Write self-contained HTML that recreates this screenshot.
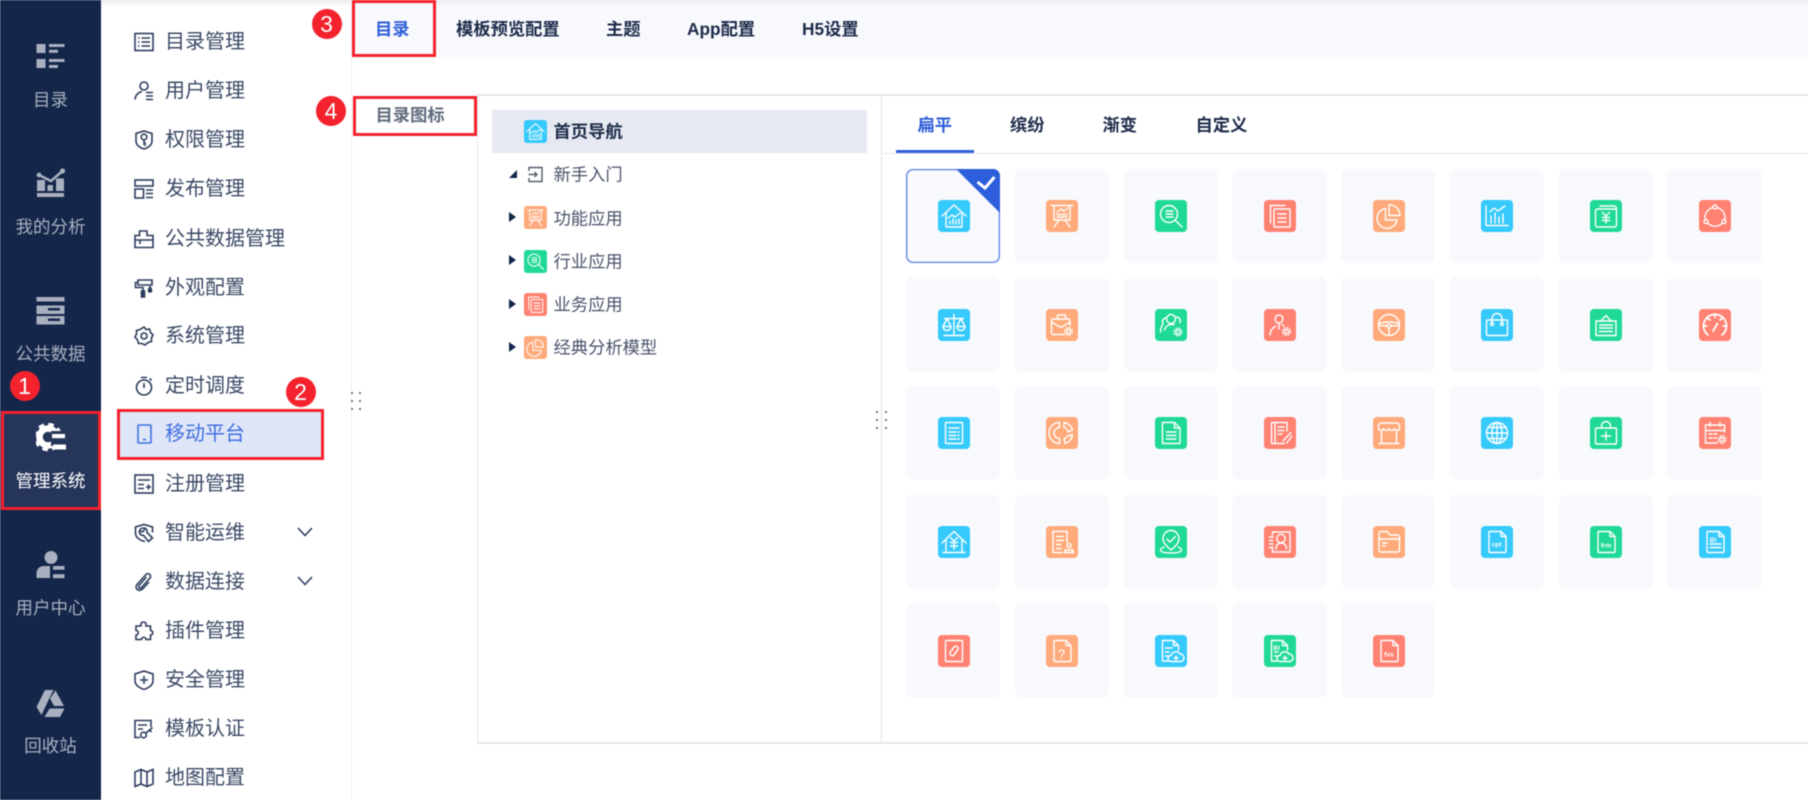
<!DOCTYPE html>
<html lang="zh">
<head>
<meta charset="utf-8">
<title>移动平台</title>
<style>
html,body{margin:0;padding:0;width:1808px;height:800px;overflow:hidden;background:#fff}
body{font-family:"Liberation Sans","Noto Sans CJK SC",sans-serif;position:relative}
#w{position:absolute;left:0;top:0;width:1808px;height:800px;overflow:hidden;filter:blur(.4px)}
.a{position:absolute}
.nav{position:absolute;left:0;width:101px;text-align:center;font-size:17.5px;line-height:28px;color:#a9b0bf;white-space:nowrap}
.m{position:absolute;left:165px;font-size:20px;line-height:30px;color:#3b4966;white-space:nowrap;transform:translateY(1px)}
.mi{position:absolute;left:134px;width:20px;height:20px;fill:none;stroke:#2c3c5c;stroke-width:1.6}
.tb{position:absolute;top:15px;font-size:17.3px;line-height:28px;font-weight:700;color:#1d2b4a;white-space:nowrap}
.tr{position:absolute;left:553.500px;font-size:17.3px;line-height:26px;color:#485269;white-space:nowrap;transform:translateY(.7px)}
.ti{position:absolute;left:523.5px;width:23px;height:23px}
.ar{position:absolute;left:509px;width:0;height:0;border-left:7px solid #14264a;border-top:5.5px solid transparent;border-bottom:5.5px solid transparent}
.rt{position:absolute;top:111px;font-size:17.3px;line-height:28px;font-weight:700;color:#1d2b4a;white-space:nowrap}
.t{position:absolute;width:94.4px;height:94.4px;border-radius:7px;background:#f8f9fd}
.t svg{position:absolute;left:31.7px;top:31.3px;width:32px;height:32px}
.ic{fill:none;stroke:#fff;stroke-width:1.4;stroke-linecap:round;stroke-linejoin:round}
.ic text{fill:#fff;stroke:none;font-family:"Liberation Sans",sans-serif;font-weight:700;font-size:6.5px;text-anchor:middle}
.r{position:absolute;border:3px solid #f3222c;box-sizing:border-box}
.c{position:absolute;width:30px;height:30px;border-radius:50%;background:#f3222c;color:#fff;font-size:23px;line-height:30px;text-align:center}
.d{position:absolute;width:2px;height:2px;border-radius:50%;background:#46536f}
</style>
</head>
<body>
<div id="w">

<!-- left nav -->
<div class="a" style="left:0;top:0;width:101px;height:800px;background:#14264a"></div>
<div class="a" style="left:0;top:411px;width:101px;height:99px;background:#26355a"></div>

<svg class="a" style="left:36px;top:44px" width="29" height="25" viewBox="0 0 29 25" fill="#a9b0bf"><rect x="0.5" y="0" width="9" height="9"/><rect x="13" y="0" width="15.5" height="3"/><rect x="13" y="5.8" width="9" height="3"/><rect x="0.5" y="15" width="9" height="9"/><rect x="13" y="15" width="15.5" height="3"/><rect x="13" y="21" width="9" height="3"/></svg>
<div class="nav" style="top:86px;">目录</div>

<svg class="a" style="left:36px;top:168px" width="29" height="30" viewBox="0 0 29 30" fill="#a9b0bf"><path d="M3 7 L15 13 L26.5 3" fill="none" stroke="#a9b0bf" stroke-width="2.5"/><circle cx="3" cy="7" r="2.4"/><circle cx="26.5" cy="3" r="2.6"/><path d="M1 12H9V23H1Z M11.5 17H17V23H11.5Z M20 10.5H28V23H20Z M1 25H28V29H1Z"/></svg>
<div class="nav" style="top:213px;">我的分析</div>

<svg class="a" style="left:36px;top:297px" width="29" height="28" viewBox="0 0 29 28" fill="#a9b0bf"><rect x="0.5" y="0" width="28" height="4.5"/><path fill-rule="evenodd" d="M0.5 8.5H28.5V17H0.5Z M12 11V13.5H24V11Z"/><path fill-rule="evenodd" d="M0.5 19H28.5V27.5H0.5Z M12 21.5V24H24V21.5Z"/></svg>
<div class="nav" style="top:340px;">公共数据</div>

<svg class="a" style="left:36px;top:423px" width="30" height="30" viewBox="0 0 30 30"><circle cx="12" cy="14" r="8.5" fill="none" stroke="#fff" stroke-width="6.5"/><circle cx="12" cy="14" r="12.5" fill="none" stroke="#fff" stroke-width="3.5" stroke-dasharray="5.5 4.3"/><rect x="15" y="8" width="15" height="15" fill="#26355a"/><rect x="16" y="11" width="13" height="4.2" fill="#fff"/><rect x="17" y="21.5" width="13" height="5" fill="#fff"/></svg>
<div class="nav" style="top:467px;color:#fff;">管理系统</div>

<svg class="a" style="left:36px;top:550px" width="29" height="29" viewBox="0 0 29 29" fill="#a9b0bf"><circle cx="15" cy="7.5" r="6.5"/><path d="M0.5 28V23C0.5 19 4 16 8 16H14V28Z"/><rect x="17" y="16" width="11.5" height="3.7"/><rect x="17" y="24.2" width="11.5" height="4"/></svg>
<div class="nav" style="top:594px;">用户中心</div>

<svg class="a" style="left:35px;top:689px" width="30" height="29" viewBox="0 0 30 29" fill="#a9b0bf"><path d="M10 1H18.5L14 10 6.5 26 1.5 18Z"/><path d="M20.5 1.5L29 17H19L15 9.5Z"/><path d="M14.5 19.5H29.5L25 28H9.5Z"/></svg>
<div class="nav" style="top:732px;">回收站</div>

<!-- second menu -->
<div class="a" style="left:101px;top:0;width:250px;height:800px;background:#fff"></div>
<div class="a" style="left:351px;top:0;width:1px;height:800px;background:#eff0f5"></div>
<div class="a" style="left:118px;top:411px;width:204px;height:48px;background:#dfe6f8"></div>

<svg class="mi" style="top:32px" viewBox="0 0 20 20"><rect x="1" y="1.5" width="18" height="17"/><path d="M4 6h1.5M7.5 6H16M4 10h1.5M7.5 10H16M4 14h1.5M7.5 14H16"/></svg>
<div class="m" style="top:26px">目录管理</div>
<svg class="mi" style="top:81px" viewBox="0 0 20 20"><circle cx="10" cy="5" r="4"/><path d="M1 18.5C1.5 14 4 11.5 8 10.5M12 11.5h7M12 15h7M12 18.5h7"/></svg>
<div class="m" style="top:75px">用户管理</div>
<svg class="mi" style="top:130px" viewBox="0 0 20 20"><path d="M10 1L18 3.5V11C18 15 14 18 10 19 6 18 2 15 2 11V3.5Z"/><circle cx="10" cy="7" r="2.8"/><path d="M10 10V15M10 13H12M10 15H12"/></svg>
<div class="m" style="top:124px">权限管理</div>
<svg class="mi" style="top:179px" viewBox="0 0 20 20"><rect x="1" y="1" width="18" height="6"/><rect x="1" y="10" width="8.5" height="9"/><path d="M12 11h7M12 14.5h7M12 18.5h7"/></svg>
<div class="m" style="top:173px">发布管理</div>
<svg class="mi" style="top:229px" viewBox="0 0 20 20"><path d="M1 6.5H5.5V2H13V6.5H19V18.500H1Z"/><path d="M1 11H19M6 11V15"/></svg>
<div class="m" style="top:223px">公共数据管理</div>
<svg class="mi" style="top:278px" viewBox="0 0 20 20"><path d="M4 2H18V7H4ZM4 4.5H1.5V9.5H9V13"/><rect x="7.5" y="13" width="3" height="6" fill="#2c3c5c"/><path d="M16 9C14 12 14 14 16 14 18 14 18 12 16 9Z" fill="#2c3c5c"/></svg>
<div class="m" style="top:272px">外观配置</div>
<svg class="mi" style="top:326px" viewBox="0 0 20 20"><path d="M10 1L12 3.5 15.5 3 16.5 6.5 19 9 17.5 12 17.5 15.5 14 16.5 11 19 8 17.5 4.5 17.5 3.5 14 1 11 2.5 8 2.5 4.5 6 3.5Z"/><circle cx="10" cy="10" r="3"/></svg>
<div class="m" style="top:320px">系统管理</div>
<svg class="mi" style="top:376px" viewBox="0 0 20 20"><circle cx="10" cy="11.5" r="7.5"/><path d="M7 1.5H13M10 7V12M15.5 2.5L17.5 4.5"/></svg>
<div class="m" style="top:370px">定时调度</div>
<svg class="mi" style="top:424px;stroke:#3f6fe0" viewBox="0 0 20 20"><rect x="4" y="1" width="13" height="18" rx="1"/><path d="M9 15.5H12"/></svg>
<div class="m" style="top:418px;color:#3f6fe0">移动平台</div>
<svg class="mi" style="top:474px" viewBox="0 0 20 20"><rect x="1" y="1" width="18" height="18"/><path d="M4 6H16M4 10.5H10M4 14.5H10M12 13H17M14.5 10.5V15.5"/></svg>
<div class="m" style="top:468px">注册管理</div>
<svg class="mi" style="top:523px" viewBox="0 0 20 20"><path d="M11 18.5C6 17.5 1.500 14.500 1.500 10V4L10 1.500 18.500 4V9.500"/><path d="M9.500 5A4 4 0 0 0 5.500 10C6 11.500 7.500 12.500 9.500 12.300L14.500 18.500 18.500 15 13 9.500C13.500 7.500 12.500 5.500 10.500 5L10 7.500 8 9 6 8"/></svg>
<div class="m" style="top:517px">智能运维</div>
<svg class="mi" style="top:572px" viewBox="0 0 20 20"><path d="M12.5 5L5 13.5C3.5 15.5 6 17 7.5 15.5L16 6C18 3.5 14.5 0 12 2.5L3 12.5C0 16 4.5 20.5 8.5 17L15 10"/></svg>
<div class="m" style="top:566px">数据连接</div>
<svg class="mi" style="top:621px" viewBox="0 0 20 20"><path d="M7 3C7 0.5 12 0.5 12 3V5H16.5V9.5C19.5 9.5 19.5 14 16.5 14V18.5H12C12 15.5 7.5 15.5 7.5 18.5H2V14C5 14 5 9.5 2 9.5V5H7Z"/></svg>
<div class="m" style="top:615px">插件管理</div>
<svg class="mi" style="top:670px" viewBox="0 0 20 20"><path d="M10 1L19 4V11C19 15 14.5 18 10 19.5 5.5 18 1 15 1 11V4Z"/><path d="M10 6V14M6 10H14"/></svg>
<div class="m" style="top:664px">安全管理</div>
<svg class="mi" style="top:719px" viewBox="0 0 20 20"><path d="M6 18.5H1V1.5H17V8M4 6H13M4 10H9"/><circle cx="9.5" cy="16" r="2.8"/><path d="M12 14L18.5 8.5M15.5 11L17.5 13"/></svg>
<div class="m" style="top:713px">模板认证</div>
<svg class="mi" style="top:768px" viewBox="0 0 20 20"><path d="M1 4L7 1.5 13 4 19 1.5V16L13 18.5 7 16 1 18.5Z M7 1.5V16M13 4V18.5"/></svg>
<div class="m" style="top:762px">地图配置</div>

<svg class="a" style="left:296px;top:526px" width="18" height="12" viewBox="0 0 18 12"><path d="M2 2L9 9.5 16 2" fill="none" stroke="#2c3c5c" stroke-width="1.6"/></svg>
<svg class="a" style="left:296px;top:575px" width="18" height="12" viewBox="0 0 18 12"><path d="M2 2L9 9.5 16 2" fill="none" stroke="#2c3c5c" stroke-width="1.6"/></svg>

<div class="a" style="left:101px;top:0;width:1707px;height:6px;background:linear-gradient(#e8eaef,rgba(255,255,255,0));z-index:3"></div>

<!-- top tabs -->
<div class="a" style="left:352px;top:0;width:1456px;height:57px;background:#f8f9fd"></div>
<div class="tb" style="left:375px;color:#2f5fd8">目录</div>
<div class="tb" style="left:456px">模板预览配置</div>
<div class="tb" style="left:606px">主题</div>
<div class="tb" style="left:687px">App配置</div>
<div class="tb" style="left:802px">H5设置</div>

<!-- panel -->
<div class="a" style="left:476.5px;top:94px;width:1331.5px;height:2px;background:#e6e7ee"></div>
<div class="a" style="left:476.5px;top:94px;width:1.5px;height:649px;background:#e6e7ee"></div>
<div class="a" style="left:476.5px;top:742px;width:1331.5px;height:1.5px;background:#e6e7ee"></div>
<div class="a" style="left:881px;top:94px;width:1.2px;height:650px;background:#e2e2ea"></div>
<div class="a" style="left:882px;top:153px;width:926px;height:1.3px;background:#e6e7ee"></div>

<div class="a" style="left:375.500px;top:102px;font-size:17.3px;line-height:26px;font-weight:700;color:#626c7e">目录图标</div>

<!-- tree -->
<div class="a" style="left:492px;top:110px;width:375px;height:43px;background:#e6e9f1"></div>
<svg class="ti ic" style="top:119.5px" viewBox="0 0 32 32"><rect width="32" height="32" rx="4" fill="#36c9fb" stroke="none"/><path d="M4 16L16 5 28 16M8 13V27H24V13M12 24v-3M15 24v-5M18 24v-4M21 24v-5M10 18l4-3 3 2 5-4"/></svg>
<div class="tr" style="top:118px;font-weight:700;color:#1d2b4a">首页导航</div>

<div class="a" style="left:509px;top:170px;width:0;height:0;border-bottom:8px solid #14264a;border-left:8px solid transparent"></div>
<svg class="a" style="left:528px;top:166px" width="15" height="17" viewBox="0 0 15 17"><path d="M1 5V1.5H14V15.5H1V12M0.5 8.5H9M6.5 6L9 8.5 6.5 11" fill="none" stroke="#555d6d" stroke-width="1.4"/></svg>
<div class="tr" style="top:161px">新手入门</div>

<div class="ar" style="top:212px"></div>
<svg class="ti ic" style="top:206px" viewBox="0 0 32 32"><rect width="32" height="32" rx="4" fill="#ffaa7b" stroke="none"/><path d="M5 5.5H27M8 5.5V20H24V5.5M11 17h10M11 14.5h10M11 12l4-3 3 2 4-3M13 20L8 27M19 20L24 27"/></svg>
<div class="tr" style="top:204.5px">功能应用</div>

<div class="ar" style="top:255px"></div>
<svg class="ti ic" style="top:249.5px" viewBox="0 0 32 32"><rect width="32" height="32" rx="4" fill="#20d997" stroke="none"/><circle cx="14" cy="14" r="8.5"/><path d="M20 20L27 27M11 11h7M11 14h7M11 17h7"/></svg>
<div class="tr" style="top:248px">行业应用</div>

<div class="ar" style="top:298.5px"></div>
<svg class="ti ic" style="top:292.5px" viewBox="0 0 32 32"><rect width="32" height="32" rx="4" fill="#ff8272" stroke="none"/><rect x="10" y="9" width="16" height="18" rx="1"/><path d="M6.5 23V5.5H21M14 14h8M14 18h8M14 22h8"/></svg>
<div class="tr" style="top:291px">业务应用</div>

<div class="ar" style="top:341.5px"></div>
<svg class="ti ic" style="top:335.5px" viewBox="0 0 32 32"><rect width="32" height="32" rx="4" fill="#ffaa7b" stroke="none"/><path d="M12.5 8.5A10 10 0 1 0 24 20H12.5ZM16 5A10.5 10.5 0 0 1 27 15.5H16Z"/></svg>
<div class="tr" style="top:334px">经典分析模型</div>

<!-- resizers -->
<i class="d" style="left:351px;top:392px"></i><i class="d" style="left:359px;top:392px"></i>
<i class="d" style="left:351px;top:400px"></i><i class="d" style="left:359px;top:400px"></i>
<i class="d" style="left:351px;top:408px"></i><i class="d" style="left:359px;top:408px"></i>
<i class="d" style="left:876px;top:411px"></i><i class="d" style="left:885px;top:411px"></i>
<i class="d" style="left:876px;top:419px"></i><i class="d" style="left:885px;top:419px"></i>
<i class="d" style="left:876px;top:427px"></i><i class="d" style="left:885px;top:427px"></i>

<!-- right tabs -->
<div class="rt" style="left:917.5px;color:#2f5fd8">扁平</div>
<div class="rt" style="left:1010px">缤纷</div>
<div class="rt" style="left:1102.5px">渐变</div>
<div class="rt" style="left:1195.5px">自定义</div>
<div class="a" style="left:896px;top:150px;width:78px;height:3px;background:#2f5fd8"></div>

<!-- tiles row 1 -->
<div class="t" style="left:906px;top:168.7px;box-shadow:inset 0 0 0 1.3px #5a80e6;overflow:hidden">
<svg class="ic" viewBox="0 0 32 32"><rect width="32" height="32" rx="4" fill="#36c9fb" stroke="none"/><path d="M4 16L16 5 28 16M8 13V27H24V13M12 24v-3M15 24v-5M18 24v-4M21 24v-5M10 18l4-3 3 2 5-4"/></svg>
<svg style="left:50.4px;top:0;width:44px;height:44px" viewBox="0 0 44 44"><path d="M0 0H44V44Z" fill="#2d5fdc"/><path d="M21.5 13L29 19 38.5 8" fill="none" stroke="#fff" stroke-width="3"/></svg>
</div>
<div class="t" style="left:1014.8px;top:168.7px"><svg class="ic" viewBox="0 0 32 32"><rect width="32" height="32" rx="4" fill="#ffaa7b" stroke="none"/><path d="M5 5.5H27M8 5.5V20H24V5.5M11 17h10M11 14.5h10M11 12l4-3 3 2 4-3M13 20L8 27M19 20L24 27"/></svg></div>
<div class="t" style="left:1123.5px;top:168.7px"><svg class="ic" viewBox="0 0 32 32"><rect width="32" height="32" rx="4" fill="#20d997" stroke="none"/><circle cx="14" cy="14" r="8.5"/><path d="M20 20L27 27M11 11h7M11 14h7M11 17h7"/></svg></div>
<div class="t" style="left:1232.3px;top:168.7px"><svg class="ic" viewBox="0 0 32 32"><rect width="32" height="32" rx="4" fill="#ff8272" stroke="none"/><rect x="10" y="9" width="16" height="18" rx="1"/><path d="M6.5 23V5.5H21M14 14h8M14 18h8M14 22h8"/></svg></div>
<div class="t" style="left:1341px;top:168.7px"><svg class="ic" viewBox="0 0 32 32"><rect width="32" height="32" rx="4" fill="#ffaa7b" stroke="none"/><path d="M12.5 8.5A10 10 0 1 0 24 20H12.5ZM16 5A10.5 10.5 0 0 1 27 15.5H16Z"/></svg></div>
<div class="t" style="left:1449.8px;top:168.7px"><svg class="ic" viewBox="0 0 32 32"><rect width="32" height="32" rx="4" fill="#36c9fb" stroke="none"/><path d="M5 6V25.5H27M10 23v-7M14 23v-10M18 23v-6M22 23v-9M9 12l4-4 4 3 7-5"/></svg></div>
<div class="t" style="left:1558.6px;top:168.7px"><svg class="ic" viewBox="0 0 32 32"><rect width="32" height="32" rx="4" fill="#20d997" stroke="none"/><rect x="5.5" y="9" width="21" height="18" rx="2"/><path d="M10 6H24A2.5 2.5 0 0 1 26.5 8.5V10M12.5 12.5L16 16 19.5 12.5M16 16V23M12.5 17.5H19.5M12.5 20.5H19.5"/></svg></div>
<div class="t" style="left:1667.3px;top:168.7px"><svg class="ic" viewBox="0 0 32 32"><rect width="32" height="32" rx="4" fill="#ff8272" stroke="none"/><circle cx="16" cy="7" r="2"/><circle cx="7" cy="21.5" r="2"/><circle cx="25" cy="21.5" r="2"/><path d="M14 7.5A10.5 10.5 0 0 0 6 19M18 7.5A10.5 10.5 0 0 1 26 19M9 23.5A10.5 10.5 0 0 0 23 23.5"/></svg></div>

<!-- row 2 -->
<div class="t" style="left:906px;top:277.4px"><svg class="ic" viewBox="0 0 32 32"><rect width="32" height="32" rx="4" fill="#36c9fb" stroke="none"/><path d="M16 5.5V26M6 26.5H26M6.5 9.5H25.5M9 9.5L5 17.5M9 9.5L13 17.5M5 17.5A4 4 0 0 0 13 17.5ZM23 9.5L19 17.5M23 9.500L27 17.5M19 17.5A4 4 0 0 0 27 17.5Z"/></svg></div>
<div class="t" style="left:1014.8px;top:277.4px"><svg class="ic" viewBox="0 0 32 32"><rect width="32" height="32" rx="4" fill="#ffaa7b" stroke="none"/><path d="M24 16V11.5A1.5 1.5 0 0 0 22.5 10H7A1.5 1.5 0 0 0 5.5 11.5V24A1.5 1.5 0 0 0 7 25.5H18M11.5 10V6H19.5V10M5.5 13L15 18.5 24 13"/><circle cx="22.5" cy="22.5" r="2"/><circle cx="22.5" cy="22.5" r="3.8" stroke-width="1.6" stroke-dasharray="1.8 1.2" stroke-linecap="butt"/></svg></div>
<div class="t" style="left:1123.5px;top:277.4px"><svg class="ic" viewBox="0 0 32 32"><rect width="32" height="32" rx="4" fill="#20d997" stroke="none"/><circle cx="16" cy="10" r="4.5"/><path d="M11 9A4 4 0 0 0 8 15C6.500 17 5.500 20 5.500 23M21 8A4 4 0 0 1 25 13.500M9.500 21A7 7 0 0 1 16 15.500H19"/><circle cx="23" cy="23" r="2"/><circle cx="23" cy="23" r="3.8" stroke-width="1.6" stroke-dasharray="1.8 1.2" stroke-linecap="butt"/></svg></div>
<div class="t" style="left:1232.3px;top:277.4px"><svg class="ic" viewBox="0 0 32 32"><rect width="32" height="32" rx="4" fill="#ff8272" stroke="none"/><circle cx="15" cy="10" r="4"/><path d="M15 14V20M6 26A10 10 0 0 1 12 17M18 15.5L20 17"/><circle cx="22.5" cy="22.500" r="2"/><circle cx="22.5" cy="22.500" r="3.8" stroke-width="1.6" stroke-dasharray="1.8 1.2" stroke-linecap="butt"/></svg></div>
<div class="t" style="left:1341px;top:277.4px"><svg class="ic" viewBox="0 0 32 32"><rect width="32" height="32" rx="4" fill="#ffaa7b" stroke="none"/><circle cx="16" cy="16" r="10.5"/><path d="M6 14.500C12 12.500 20 12.500 26 14.500M6 16.500L14 17M26 16.500L18 17M16 19V26"/><circle cx="16" cy="17" r="1.8"/></svg></div>
<div class="t" style="left:1449.8px;top:277.4px"><svg class="ic" viewBox="0 0 32 32"><rect width="32" height="32" rx="4" fill="#36c9fb" stroke="none"/><rect x="5.5" y="11" width="21" height="15.5" rx="1"/><path d="M11 14V9.5A5 5 0 0 1 21 9.5V14"/><circle cx="11" cy="15" r="1.500"/><circle cx="21" cy="15" r="1.500"/></svg></div>
<div class="t" style="left:1558.6px;top:277.4px"><svg class="ic" viewBox="0 0 32 32"><rect width="32" height="32" rx="4" fill="#20d997" stroke="none"/><rect x="6" y="12" width="20" height="14.5"/><path d="M11 12L16 6.500 21 12M9.500 16H22.500M9.500 19H22.500M9.500 22.500H22.500"/></svg></div>
<div class="t" style="left:1667.3px;top:277.4px"><svg class="ic" viewBox="0 0 32 32"><rect width="32" height="32" rx="4" fill="#ff8272" stroke="none"/><path d="M9 26A11.500 11.500 0 1 1 23 26" stroke-width="1.800"/><path d="M16 5V8.500M8.500 9L11 11M23.500 9L21 11M4.500 17H8M27.500 17H24M14 22L18.500 14.500" stroke-width="1.800"/></svg></div>

<!-- row 3 -->
<div class="t" style="left:906px;top:386px"><svg class="ic" viewBox="0 0 32 32"><rect width="32" height="32" rx="4" fill="#36c9fb" stroke="none"/><rect x="7.500" y="5.500" width="17" height="21" rx="1"/><path d="M11 11H21M11 15H18M20 15H21M11 18.500H18M20 18.500H21M11 22H18M20 22H21"/></svg></div>
<div class="t" style="left:1014.8px;top:386px"><svg class="ic" viewBox="0 0 32 32"><rect width="32" height="32" rx="4" fill="#ffaa7b" stroke="none"/><path d="M13.500 5.500A10.500 10.500 0 0 0 13.500 26.500V21.500A5.500 5.500 0 0 1 13.500 10.500ZM18 5.500A10.500 10.500 0 0 1 26.500 13L22 15A5.500 5.500 0 0 0 18 10.500ZM26.500 18A10.500 10.500 0 0 1 19 26.500L18 21.500A5.500 5.500 0 0 0 22 18.500Z"/></svg></div>
<div class="t" style="left:1123.5px;top:386px"><svg class="ic" viewBox="0 0 32 32"><rect width="32" height="32" rx="4" fill="#20d997" stroke="none"/><path d="M7.500 5.500H19.500L25 11V26.500H7.500ZM19.500 5.500V11H25M11.500 15H21M11.500 18.500H21M11.500 22H21"/></svg></div>
<div class="t" style="left:1232.3px;top:386px"><svg class="ic" viewBox="0 0 32 32"><rect width="32" height="32" rx="4" fill="#ff8272" stroke="none"/><path d="M7.500 5.500H23V14M7.500 5.500V26.500H20M11 5.500V26.500M14 10H20M14 13.500H20M14 17H18M19 24L27 15.500M22.500 26L28 19"/></svg></div>
<div class="t" style="left:1341px;top:386px"><svg class="ic" viewBox="0 0 32 32"><rect width="32" height="32" rx="4" fill="#ffaa7b" stroke="none"/><path d="M8.500 6H23.500C26 6 27 8.500 26.500 11 26.500 14 22 14 21.500 11.500 21 14 16.500 14 16 11.500 15.500 14 11 14 10.500 11.500 10 14 5.500 14 5.500 11 5 8.500 6 6 8.500 6ZM8.500 14V26.500M23.500 14V26.500M6 26.500H26"/></svg></div>
<div class="t" style="left:1449.8px;top:386px"><svg class="ic" viewBox="0 0 32 32"><rect width="32" height="32" rx="4" fill="#36c9fb" stroke="none"/><circle cx="16" cy="16" r="10.500"/><ellipse cx="16" cy="16" rx="5" ry="10.500"/><path d="M16 5.500V26.500M5.500 16H26.500M7 10.500H25M7 21.500H25"/></svg></div>
<div class="t" style="left:1558.6px;top:386px"><svg class="ic" viewBox="0 0 32 32"><rect width="32" height="32" rx="4" fill="#20d997" stroke="none"/><rect x="5.500" y="11" width="21" height="16" rx="1"/><path d="M11.500 11V9A4.500 4.500 0 0 1 20.500 9V11M11.500 19H20.500M16 15V23"/></svg></div>
<div class="t" style="left:1667.3px;top:386px"><svg class="ic" viewBox="0 0 32 32"><rect width="32" height="32" rx="4" fill="#ff8272" stroke="none"/><path d="M18 26H6.500V8H25.500V15M6.500 13.500H25.500M11 5.500V9.500M21 5.500V9.500M10 17H13M15 17H18M10 21H13M15 21H17"/><circle cx="23" cy="22.500" r="2"/><circle cx="23" cy="22.500" r="3.800" stroke-width="1.600" stroke-dasharray="1.800 1.200" stroke-linecap="butt"/></svg></div>

<!-- row 4 -->
<div class="t" style="left:906px;top:494.7px"><svg class="ic" viewBox="0 0 32 32"><rect width="32" height="32" rx="4" fill="#36c9fb" stroke="none"/><path d="M4 17L16 5.500 28 17M8 14V26.500H24V14M5 26.500H27M12.500 11.500L16 15 19.500 11.500M16 15V23M12.500 16.500H19.500M12.500 20H19.500"/></svg></div>
<div class="t" style="left:1014.8px;top:494.7px"><svg class="ic" viewBox="0 0 32 32"><rect width="32" height="32" rx="4" fill="#ffaa7b" stroke="none"/><path d="M16 26.500H7V5.500H21V16M10.500 10.500H17.500M10.500 14.500H17.500M10.500 18.500H15M10.500 22.500H15M18 26.500H28M19 24H27V26.500H19Z"/><circle cx="23" cy="19.500" r="2"/></svg></div>
<div class="t" style="left:1123.5px;top:494.7px"><svg class="ic" viewBox="0 0 32 32"><rect width="32" height="32" rx="4" fill="#20d997" stroke="none"/><path d="M16 24C11 20 8 16.500 8 12.500A8 8 0 0 1 24 12.500C24 16.500 21 20 16 24ZM12 13L15 16 20.500 10.500M9 21C6.500 22 5.500 23 5.500 24 5.500 26 10 27 16 27S26.500 26 26.500 24C26.500 23 25.500 22 23 21"/></svg></div>
<div class="t" style="left:1232.3px;top:494.7px"><svg class="ic" viewBox="0 0 32 32"><rect width="32" height="32" rx="4" fill="#ff8272" stroke="none"/><path d="M8.500 9V6H26V26H8.500V23M5.500 11H9M5.500 14.500H9M5.500 18H9M5.500 21.500H9M12 23C12 19 14 17 17 17S22.500 19 22.500 23"/><circle cx="17" cy="12.500" r="4.200"/></svg></div>
<div class="t" style="left:1341px;top:494.7px"><svg class="ic" viewBox="0 0 32 32"><rect width="32" height="32" rx="4" fill="#ffaa7b" stroke="none"/><path d="M6 7.500A2 2 0 0 1 8 5.500H14L17 9H24.500A2 2 0 0 1 26.500 11V24A2 2 0 0 1 24.500 26H8A2 2 0 0 1 6 24ZM6 13H26.500M9.500 17H14M9.500 20H12"/></svg></div>
<div class="t" style="left:1449.8px;top:494.7px"><svg class="ic" viewBox="0 0 32 32"><rect width="32" height="32" rx="4" fill="#36c9fb" stroke="none"/><path d="M8 6.500A1 1 0 0 1 9 5.500H20L25 10.500V25.500A1 1 0 0 1 24 26.500H9A1 1 0 0 1 8 25.500ZM20 5.500V10.500H25"/><text x="15.500" y="20.500">cpt</text></svg></div>
<div class="t" style="left:1558.6px;top:494.7px"><svg class="ic" viewBox="0 0 32 32"><rect width="32" height="32" rx="4" fill="#20d997" stroke="none"/><path d="M8 6.500A1 1 0 0 1 9 5.500H20L25 10.500V25.500A1 1 0 0 1 24 26.500H9A1 1 0 0 1 8 25.500ZM20 5.500V10.500H25"/><text x="16" y="21.500">frm</text></svg></div>
<div class="t" style="left:1667.3px;top:494.7px"><svg class="ic" viewBox="0 0 32 32"><rect width="32" height="32" rx="4" fill="#36c9fb" stroke="none"/><path d="M8 6.500A1 1 0 0 1 9 5.500H20L25 10.500V25.500A1 1 0 0 1 24 26.500H9A1 1 0 0 1 8 25.500ZM20 5.500V10.500H25M11 18H22M11 21.500H22"/><text x="14" y="16">BI</text></svg></div>

<!-- row 5 -->
<div class="t" style="left:906px;top:603.3px"><svg class="ic" viewBox="0 0 32 32"><rect width="32" height="32" rx="4" fill="#ff8272" stroke="none"/><rect x="7.500" y="5.500" width="17" height="21" rx="1"/><path d="M14.500 14.500L12 17.500A2.500 2.500 0 0 0 15.500 20.500L18 17.500M17.500 17.500L20 14.500A2.500 2.500 0 0 0 16.500 11.500L14 14.500"/></svg></div>
<div class="t" style="left:1014.8px;top:603.3px"><svg class="ic" viewBox="0 0 32 32"><rect width="32" height="32" rx="4" fill="#ffaa7b" stroke="none"/><path d="M8 6.500A1 1 0 0 1 9 5.500H20L25 10.500V25.500A1 1 0 0 1 24 26.500H9A1 1 0 0 1 8 25.500ZM20 5.500V10.500H25"/><text x="15.500" y="23.500" style="font-size:13px;font-weight:400">?</text></svg></div>
<div class="t" style="left:1123.5px;top:603.3px"><svg class="ic" viewBox="0 0 32 32"><rect width="32" height="32" rx="4" fill="#36c9fb" stroke="none"/><path d="M13 26H7.500V5.500H18.500L23.500 10.500V15M18.500 5.500V10.500H23.500M10.500 13H17M10.500 17H14M10.500 21H13"/><path d="M16 26.500A3 3 0 0 1 16 20.500 5 5 0 0 1 25 19 3.800 3.800 0 0 1 26 26.500ZM21 21V25M19 23H23"/></svg></div>
<div class="t" style="left:1232.3px;top:603.3px"><svg class="ic" viewBox="0 0 32 32"><rect width="32" height="32" rx="4" fill="#20d997" stroke="none"/><path d="M13 26H7.500V5.500H18.500L23.500 10.500V15M18.500 5.500V10.500H23.500M10.500 17H14M10.500 21H13"/><path d="M16 26.500A3 3 0 0 1 16 20.500 5 5 0 0 1 25 19 3.800 3.800 0 0 1 26 26.500ZM21 21V25M19 23H23"/><text x="12.500" y="15">BI</text></svg></div>
<div class="t" style="left:1341px;top:603.3px"><svg class="ic" viewBox="0 0 32 32"><rect width="32" height="32" rx="4" fill="#ff8272" stroke="none"/><path d="M8 6.500A1 1 0 0 1 9 5.500H20L25 10.500V25.500A1 1 0 0 1 24 26.500H9A1 1 0 0 1 8 25.500ZM20 5.500V10.500H25"/><text x="16" y="21.500">fvs</text></svg></div>

<!-- annotations -->
<div class="r" style="left:1px;top:411px;width:100px;height:99px"></div>
<div class="r" style="left:117px;top:409px;width:207px;height:51px"></div>
<div class="r" style="left:352px;top:0;width:84px;height:57px;z-index:4"></div>
<div class="r" style="left:353px;top:96px;width:124px;height:40px"></div>
<div class="c" style="left:9.5px;top:371px">1</div>
<div class="c" style="left:285.5px;top:377px">2</div>
<div class="c" style="left:311.5px;top:9px">3</div>
<div class="c" style="left:316px;top:96px">4</div>

</div>
</body>
</html>
